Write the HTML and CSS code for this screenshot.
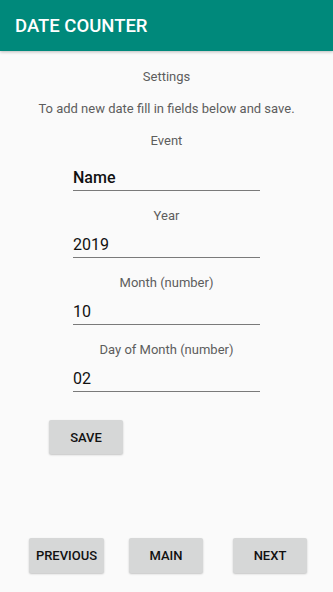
FILE: index.html
```html
<!DOCTYPE html>
<html>
<head>
<meta charset="utf-8">
<link rel="stylesheet" href="styles.css">
</head>
<body>
<div class="app">
  <header class="appbar">
    <h1 class="title">DATE COUNTER</h1>
  </header>
  <main class="content">
    <p class="label label-settings">Settings</p>
    <p class="label label-info">To add new date fill in fields below and save.</p>
    <p class="label label-event">Event</p>
    <div class="field field-first">Name</div>
    <p class="label">Year</p>
    <div class="field">2019</div>
    <p class="label">Month (number)</p>
    <div class="field">10</div>
    <p class="label">Day of Month (number)</p>
    <div class="field">02</div>
    <div class="save-row">
      <button class="btn btn-save">SAVE</button>
    </div>
  </main>
  <nav class="bottom">
    <button class="btn btn-prev">PREVIOUS</button>
    <button class="btn btn-main">MAIN</button>
    <button class="btn btn-next">NEXT</button>
  </nav>
</div>
</body>
</html>
```
FILE: styles.css
```css
html, body {
  margin: 0;
  padding: 0;
  background: #fafafa;
}
body {
  font-family: Roboto, "Noto Sans", sans-serif;
}
.app {
  width: 333px;
  height: 592px;
  display: flex;
  flex-direction: column;
  overflow: hidden;
}
.appbar {
  height: 51px;
  background: #00897b;
  display: flex;
  align-items: center;
  padding-left: 15px;
  box-shadow: 0 1px 3px rgba(0,0,0,0.25);
  position: relative;
  z-index: 1;
}
.title {
  margin: 0;
  color: #ffffff;
  font-size: 18.5px;
  font-weight: 500;
  line-height: 20px;
}
.content {
  flex: 1;
  display: flex;
  flex-direction: column;
  align-items: center;
}
.label {
  margin: 17px 0 0;
  font-size: 13px;
  line-height: 16px;
  color: #5d5d5d;
  text-align: center;
}
.label-settings {
  margin-top: 18px;
}
.label-info,
.label-event {
  margin-top: 16px;
}
.field {
  width: 187px;
  margin-top: 11px;
  font-size: 16px;
  line-height: 20px;
  color: #111111;
  padding-bottom: 2px;
  border-bottom: 1px solid #7a7a7a;
}
.field-first {
  margin-top: 19px;
  font-weight: 500;
}
.save-row {
  align-self: stretch;
  padding-left: 49px;
  margin-top: 28px;
}
.btn {
  width: 74px;
  height: 35px;
  border: none;
  border-radius: 2px;
  background: #d6d7d7;
  box-shadow: 0 1px 2px rgba(0,0,0,0.22);
  font-family: Roboto, "Noto Sans", sans-serif;
  font-size: 13px;
  font-weight: 500;
  color: #111111;
  padding: 0;
}
.btn-save {
  height: 34px;
}
.bottom {
  display: flex;
  padding: 0 0 19px 29px;
}
.btn-prev {
  width: 75px;
}
.btn-main {
  margin-left: 25px;
}
.btn-next {
  margin-left: 30px;
}
```
